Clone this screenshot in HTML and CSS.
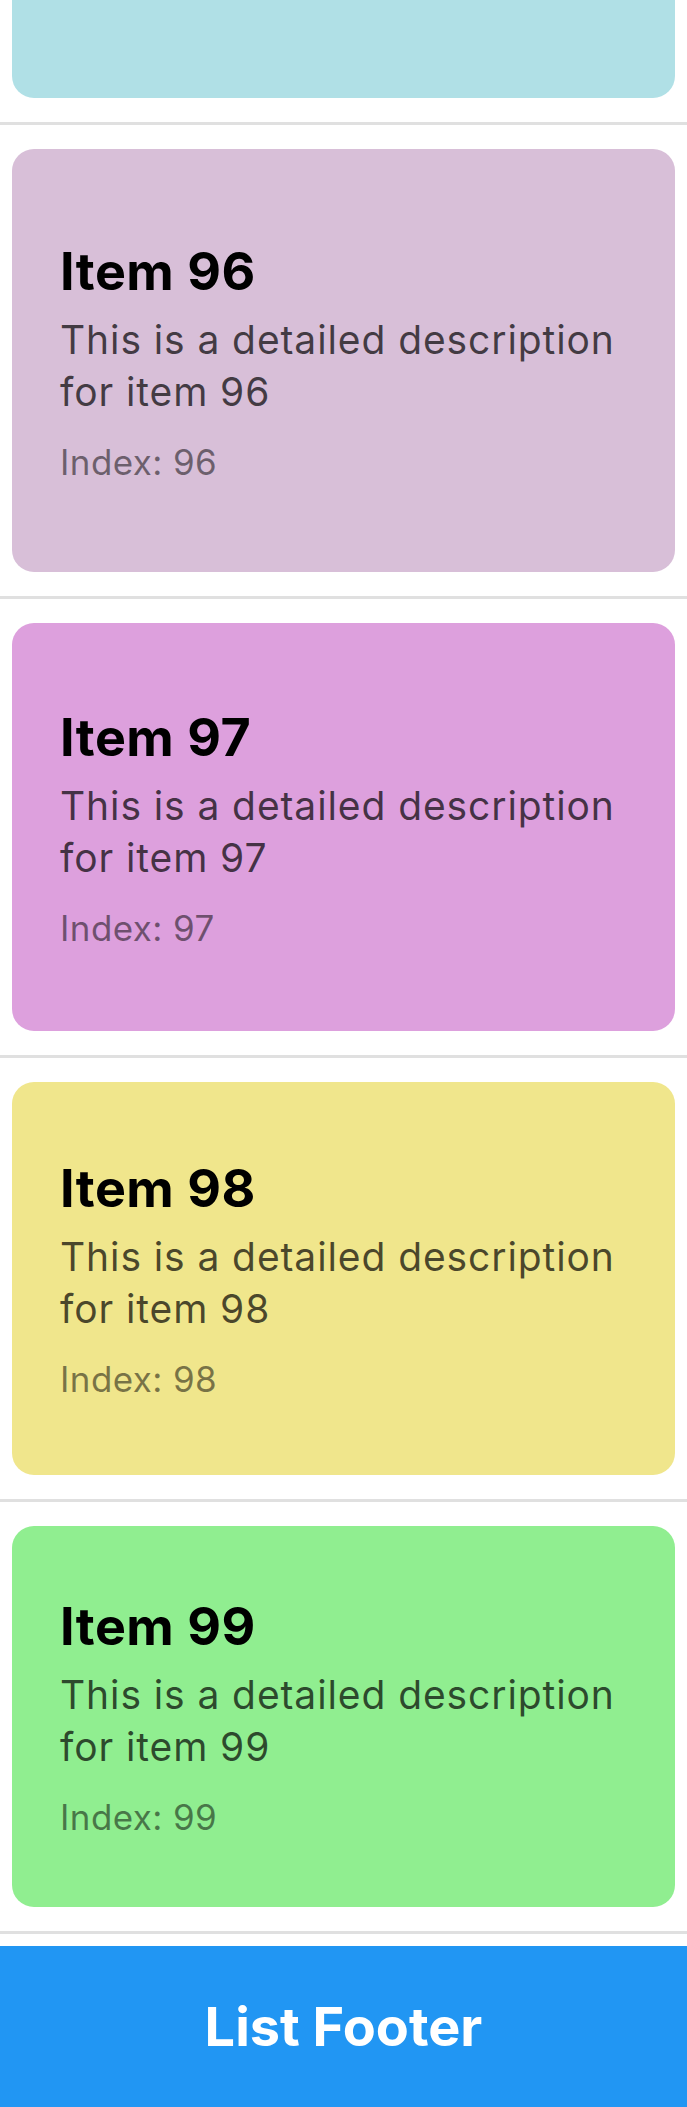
FILE: index.html
```html
<!DOCTYPE html>
<html lang="en">
<head>
<meta charset="utf-8">
<title>List</title>
<link rel="stylesheet" href="styles.css">
</head>
<body>
<main class="list">
  <div class="row row--first">
    <div class="card card--clipped bg-powderblue"></div>
  </div>
  <div class="row">
    <div class="card pad-0 bg-thistle">
      <h2 class="card-title">Item 96</h2>
      <p class="card-desc">This is a detailed description for item 96</p>
      <p class="card-index">Index: 96</p>
    </div>
  </div>
  <div class="row">
    <div class="card pad-1 bg-plum">
      <h2 class="card-title">Item 97</h2>
      <p class="card-desc">This is a detailed description for item 97</p>
      <p class="card-index">Index: 97</p>
    </div>
  </div>
  <div class="row">
    <div class="card pad-2 bg-khaki">
      <h2 class="card-title">Item 98</h2>
      <p class="card-desc">This is a detailed description for item 98</p>
      <p class="card-index">Index: 98</p>
    </div>
  </div>
  <div class="row">
    <div class="card pad-3 bg-lightgreen">
      <h2 class="card-title">Item 99</h2>
      <p class="card-desc">This is a detailed description for item 99</p>
      <p class="card-index">Index: 99</p>
    </div>
  </div>
  <footer class="list-footer">List Footer</footer>
</main>
</body>
</html>
```

FILE: styles.css
```css
html, body {
  margin: 0;
  padding: 0;
  background: #ffffff;
}

body {
  width: 687px;
  overflow: hidden;
  font-family: Inter, "Noto Sans", "Liberation Sans", sans-serif;
}

.list {
  display: flex;
  flex-direction: column;
}

.row {
  padding: 24px 12px;
  border-bottom: 3px solid #e0e0e0;
}

.row--first {
  padding-top: 0;
}

.card {
  border-radius: 22px;
  padding-left: 48px;
  padding-right: 40px;
  display: flex;
  flex-direction: column;
}

.card--clipped {
  height: 98px;
  border-radius: 0 0 22px 22px;
}

.pad-0 { padding-top: 92px; padding-bottom: 89px; }
.pad-1 { padding-top: 84px; padding-bottom: 82px; }
.pad-2 { padding-top: 76px; padding-bottom: 75px; }
.pad-3 { padding-top: 70px; padding-bottom: 69px; }

.bg-powderblue { background: #b0e0e6; }
.bg-thistle { background: #d8bfd8; }
.bg-plum { background: #dda0dd; }
.bg-khaki { background: #f0e68c; }
.bg-lightgreen { background: #90ee90; }

.card-title {
  margin: 0;
  font-size: 52px;
  line-height: 62px;
  font-weight: 700;
  letter-spacing: 0.5px;
  color: #000000;
}

.card-desc {
  margin: 11px 0 0;
  font-size: 39px;
  line-height: 52px;
  font-weight: 400;
  letter-spacing: 0.9px;
  color: rgba(0, 0, 0, 0.7);
}

.card-index {
  margin: 23px 0 0;
  font-size: 35px;
  line-height: 42px;
  font-weight: 400;
  letter-spacing: 0.4px;
  color: rgba(0, 0, 0, 0.5);
}

.list-footer {
  margin-top: 12px;
  height: 161px;
  background: #2196f3;
  color: #ffffff;
  display: flex;
  align-items: center;
  justify-content: center;
  font-size: 54px;
  font-weight: 700;
}
```
